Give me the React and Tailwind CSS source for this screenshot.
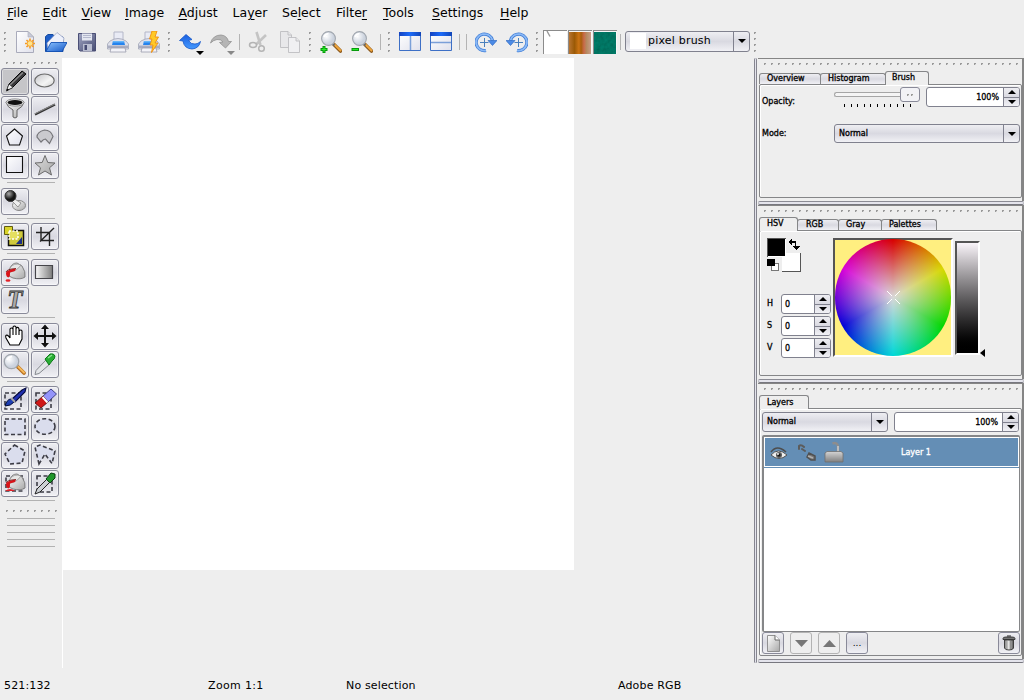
import React from "react";

const small =
  "font-['DejaVu_Sans',sans-serif] text-[8px] leading-[12px] [-webkit-text-stroke:0.3px_currentColor] whitespace-nowrap text-black";
const face = "bg-linear-to-b from-[#eeeef2] via-[#d9d9e1] to-[#f1f1f5]";

function Dots({ count, vertical, className = "" }) {
  return (
    <div className={`flex shrink-0 ${vertical ? "flex-col gap-[4px]" : "gap-[5px]"} ${className}`}>
      {Array.from({ length: count }, (_, i) => (
        <span key={i} className="h-[2px] w-[2px] border-t border-l border-[#9a9a9a] bg-[#d6d6d6]" />
      ))}
    </div>
  );
}

function Arrow({ up, color = "#000", big }) {
  return (
    <svg className={`shrink-0 ${big ? "h-[7px] w-[13px]" : "h-[4px] w-[8px]"}`} viewBox="0 0 7 4" preserveAspectRatio="none">
      <path d={up ? "M0 4L3.5 0L7 4Z" : "M0 0H7L3.5 4Z"} fill={color} />
    </svg>
  );
}

const menus = [
  ["", "F", "ile", "w-[35.5px]"],
  ["", "E", "dit", "w-[39px]"],
  ["", "V", "iew", "w-[43.5px]"],
  ["", "I", "mage", "w-[53.5px]"],
  ["", "A", "djust", "w-[54px]"],
  ["La", "y", "er", "w-[49.5px]"],
  ["Se", "l", "ect", "w-[54px]"],
  ["Filte", "r", "", "w-[47px]"],
  ["", "T", "ools", "w-[49px]"],
  ["", "S", "ettings", "w-[68px]"],
  ["", "H", "elp", "w-[40px]"],
];

/* ---------- toolbar drawings, 22 x 22 units ---------- */
const page = (
  <>
    <path d="M2.5 .5H14L19.500 6V21.500H2.500Z" fill="url(#paper)" stroke="#a9abbb" />
    <path d="M14 .5V6H19.5Z" fill="#c9cbd9" stroke="#a9abba" strokeWidth=".6" />
  </>
);
const printer = (
  <>
    <path d="M7 1H16V11H7Z" fill="#e9ebf5" stroke="#b4b7c8" />
    <path d="M3 10Q11 5 19 10L21.500 13V18H.5V13Z" fill="#dfe1eb" stroke="#a0a3b5" strokeWidth=".8" />
    <path d="M6 10H17L18 14H5Z" fill="#2583ee" />
    <path d="M6 10H17L17.300 11.500H5.700Z" fill="#63b5fa" />
    <path d="M1 14.500H21V17H1Z" fill="#a9adc0" />
    <path d="M4 17H18L19 21H3Z" fill="#f3f3f8" stroke="#9a9cac" strokeWidth=".8" />
  </>
);
const lens = (
  <>
    <path d="M14 13.500L20.500 20" stroke="#8b581c" strokeWidth="3.600" strokeLinecap="round" />
    <path d="M14.500 13.500L20.500 19.500" stroke="#efa63c" strokeWidth="2" strokeLinecap="round" />
    <path d="M12.500 12.500L14.500 14.500" stroke="#666" strokeWidth="2" />
    <circle cx="8.500" cy="7.500" r="6.900" fill="url(#glass)" stroke="#a0a6ae" strokeWidth="1.100" />
    <path d="M4 6Q5 3 8.500 2.500" stroke="#fff" strokeWidth="1.500" fill="none" />
  </>
);
const rotate = (
  <>
    <path d="M11 19.500A8.300 8.300 0 1 1 17.500 9.500" fill="none" stroke="#3a78d4" strokeWidth="3.200" />
    <path d="M11 19.500A8.300 8.300 0 1 1 17.500 9.500" fill="none" stroke="#8ab9f6" strokeWidth="1.800" />
    <path d="M13 9.500H22L17.500 14.500Z" fill="#4c8be6" stroke="#2461bd" strokeWidth=".6" />
    <path d="M9.500 7V16M5 11.500H13.500" stroke="#4a80bd" strokeWidth="1" />
  </>
);

const bar = {
  new: (
    <>
      {page}
      <g stroke="#f59a23" strokeWidth="1.600">
        <path d="M16 7.500V17.500M11 12.500H21M12.500 9L19.500 16M19.500 9L12.500 16" />
      </g>
      <circle cx="16" cy="12.500" r="2.800" fill="#ffe489" stroke="#f6a83a" />
    </>
  ),
  open: (
    <>
      <path d="M.5 20.500V5.500L3 3.500H8L10 6H18V20.500Z" fill="#1f5fc8" stroke="#164a9f" />
      <path d="M2 12L12 1.500L19 7L18 14L3 19Z" fill="#eef1fb" stroke="#929cbc" strokeWidth=".7" />
      <path d="M1 20.500L6 11.500H22L17 20.500Z" fill="url(#folder)" stroke="#1452b4" strokeWidth=".9" />
    </>
  ),
  save: (
    <>
      <path d="M2.500 2.500H19.500V20H4L2.500 18.500Z" fill="url(#disk)" stroke="#4b4f76" />
      <path d="M6 2.500H16V9.500H6Z" fill="#e4e7f1" />
      <path d="M7 4.500H15M7 6.500H15" stroke="#a7acc4" strokeWidth=".8" />
      <path d="M7 13H16V20H7Z" fill="#b9bdd0" />
      <path d="M8.500 14H11V19H8.500Z" fill="#454a72" />
    </>
  ),
  print: printer,
  quick: (
    <>
      {printer}
      <path d="M14 0H19L17 6H20.500L17 12H20L13.500 21.500L15 14H12L14 8H11.500Z" fill="#ffc928" stroke="#ef8e12" strokeWidth=".9" />
    </>
  ),
  undo: <path d="M.5 9.500L7 3.500L13 8.500L9.500 9.500Q12 13.500 16 13Q19 13 21.500 10.500Q20 17.500 13 18Q5 17.500 4 10Z" fill="url(#blue)" stroke="#1557c8" strokeWidth=".8" />,
  redo: <path d="M.5 12Q3 4 11 4Q17 4.500 18.500 10.500H21.500L15.500 17L9.500 11.500L13 11Q11 8 7 8.500Q3.500 9 .5 12Z" fill="#b5b5b5" stroke="#929292" strokeWidth=".8" />,
  cut: (
    <g fill="none" stroke="#b4b4b4">
      <path d="M8.500 1L12.500 14M18 4L8 13.500" strokeWidth="2.600" stroke="#c4c4c4" />
      <ellipse cx="5" cy="14" rx="3.500" ry="2.400" strokeWidth="1.500" />
      <circle cx="13.500" cy="17.500" r="2.800" strokeWidth="1.500" />
    </g>
  ),
  copy: (
    <g fill="#e8e8ea" stroke="#bdbdc1" strokeWidth=".9">
      <path d="M1.500 .5H9L12.500 4V16.500H1.500Z" />
      <path d="M9.500 6.500H17L20.500 10V21.500H9.500Z" fill="#f0f0f2" />
      <path d="M9 .5V4H12.500M17 6.500V10H20.500" />
    </g>
  ),
  zin: (<>{lens}<path d="M4 15V22M.5 18.500H7.500" stroke="#089a0c" strokeWidth="3" /><path d="M4 16V21M1.500 18.500H6.500" stroke="#25f128" strokeWidth="1" /></>),
  zout: (<>{lens}<path d="M.5 18.500H8" stroke="#089a0c" strokeWidth="3" /><path d="M1.500 18.500H7" stroke="#25f128" strokeWidth="1" /></>),
  splitv: (
    <>
      <path d="M.5 1.500H21.500V19.500H.5Z" fill="url(#paper)" stroke="#3e70c6" />
      <path d="M0 1H22V5H0Z" fill="url(#title)" /><path d="M11.500 5V19" stroke="#7b9fd8" strokeWidth="1.500" />
    </>
  ),
  splith: (
    <>
      <path d="M.5 1.500H21.500V19.500H.5Z" fill="url(#paper)" stroke="#3e70c6" />
      <path d="M0 1H22V5H0Z" fill="url(#title)" /><path d="M1 11.500H21" stroke="#7b9fd8" strokeWidth="1.500" />
    </>
  ),
  cw: rotate,
  ccw: <g transform="translate(22 0) scale(-1 1)">{rotate}</g>,
};

function BarIcon({ name, menu }) {
  return (
    <div className="relative flex h-full w-[31px] shrink-0 items-center justify-center">
      <svg className="h-[22px] w-[22px]" viewBox="0 0 22 22">{bar[name]}</svg>
      {menu && <span className="absolute right-px bottom-[3px] flex"><Arrow color={menu} /></span>}
    </div>
  );
}

const Sep = () => <div className="flex w-[7px] shrink-0 justify-center"><span className="h-[16px] w-px bg-[#b4b4b4]" /></div>;
const Handle = ({ className = "w-[10px]" }) => <div className={`flex shrink-0 justify-center ${className}`}><Dots count={4} vertical /></div>;

function Defs() {
  return (
    <svg className="absolute h-0 w-0">
      <defs>
        <linearGradient id="paper" x2="1" y2="1"><stop stopColor="#fff" /><stop offset="1" stopColor="#e0e1ec" /></linearGradient>
        <linearGradient id="gray" x2="1" y2="1"><stop stopColor="#fff" /><stop offset="1" stopColor="#a8a8a8" /></linearGradient>
        <linearGradient id="pale" x2="1" y2="1"><stop stopColor="#c4c4c8" /><stop offset=".6" stopColor="#f4f4f4" /><stop offset="1" stopColor="#d0d0d0" /></linearGradient>
        <linearGradient id="mid" x2="1" y2="1"><stop stopColor="#dcdcdc" /><stop offset="1" stopColor="#a8a8a8" /></linearGradient>
        <linearGradient id="horiz" x2="1"><stop stopColor="#fafafa" /><stop offset="1" stopColor="#7c7c7c" /></linearGradient>
        <linearGradient id="folder" x2="1" y2="1"><stop stopColor="#8cc2ff" /><stop offset="1" stopColor="#1458c6" /></linearGradient>
        <linearGradient id="disk" x2="1" y2="1"><stop stopColor="#a0a5c2" /><stop offset="1" stopColor="#474c72" /></linearGradient>
        <linearGradient id="blue" x2="0" y2="1"><stop stopColor="#1b5fe0" /><stop offset="1" stopColor="#459aff" /></linearGradient>
        <linearGradient id="title" x2="1"><stop stopColor="#1443c0" /><stop offset=".5" stopColor="#1c6af8" /><stop offset="1" stopColor="#1145b8" /></linearGradient>
        <linearGradient id="dull" x2="0" y2="1"><stop stopColor="#d4d4d4" /><stop offset="1" stopColor="#808080" /></linearGradient>
        <linearGradient id="can" x2="1"><stop stopColor="#777" /><stop offset=".4" stopColor="#eee" /><stop offset="1" stopColor="#555" /></linearGradient>
        <radialGradient id="glass" cx=".35" cy=".35"><stop stopColor="#fff" /><stop offset="1" stopColor="#ccd3de" /></radialGradient>
        <radialGradient id="ball" cx=".35" cy=".3"><stop stopColor="#aaa" /><stop offset="1" stopColor="#151515" /></radialGradient>
        <filter id="weave"><feTurbulence type="fractalNoise" baseFrequency=".3" numOctaves="2" /><feColorMatrix values="0 0 0 0 0  .5 0 0 0 .12  .4 0 0 0 .1  0 0 0 0 1" /></filter>
      </defs>
    </svg>
  );
}

/* ---------- paint tool drawings, 28 x 28 units ---------- */
const dash = { fill: "none", stroke: "#3d3d46", strokeWidth: 1.6, strokeDasharray: "4 2.5" };
const bucket = (
  <>
    <path d="M9 9Q11 4 16 4L21 7Q25 13 24 18Q20 21 12 19L8 17Z" fill="url(#gray)" stroke="#777" strokeWidth=".9" />
    <path d="M9 9Q13 3 20 6Q16 12 9 13Z" fill="#e6e6e6" stroke="#8a8a8a" strokeWidth=".7" />
    <path d="M5 14Q5 11 15 9.500L14 12L9 13.500Q9.500 17 7.500 18.500Q5 18 5 14Z" fill="#d9141a" />
    <path d="M5 13Q6 10 15 9.500" fill="none" stroke="#701313" strokeWidth=".8" />
  </>
);
const tools = {
  brush: (<><path d="M6 22L8 16L21 3L25 6L11 20Z" fill="#38383a" stroke="#080808" /><path d="M9 17L22 4.500" stroke="#8c8c8c" strokeWidth="1.300" /><path d="M5.500 22.500L8 16L12 19.500Z" fill="#eee" stroke="#222" strokeWidth=".7" /><path d="M5 23.500L6.500 20.500L8 22Z" /></>),
  ellipse: <ellipse cx="13.500" cy="12.500" rx="9.700" ry="6.500" fill="url(#pale)" stroke="#6c6c6c" strokeWidth="1.200" />,
  funnel: (<><path d="M5 6Q6 11 12 14V21Q14 23 16 21V14Q22 11 23 6Z" fill="url(#gray)" stroke="#555" strokeWidth=".9" /><ellipse cx="14" cy="6.500" rx="9" ry="3.600" fill="#eee" stroke="#777" strokeWidth=".8" /><ellipse cx="14" cy="6.500" rx="7.500" ry="2.500" fill="#111" /></>),
  line: (<><path d="M4 18.500L24 8.500" stroke="#333" strokeWidth="2.200" /><path d="M4 17.800L24 8" stroke="#a1a1a1" strokeWidth=".8" /></>),
  poly: <path d="M13.500 5L21.500 12L18.500 21H8.500L5.500 12Z" fill="url(#paper)" stroke="#111" strokeWidth="1.100" />,
  curve: <path d="M6 13Q6 8 13.500 6Q20 6 22 12.500L18.500 19.500L14.500 15Q12.500 15 10 18Z" fill="#cacace" stroke="#76767a" strokeWidth="1.200" />,
  rect: <path d="M5.500 4.500H21.500V20.500H5.500Z" fill="url(#paper)" stroke="#111" strokeWidth="1.100" />,
  star: <path d="M14 3.500L16.800 10.500L24 11L18.500 15.800L20.500 23L14 19L7.500 23L9.500 15.800L4 11L11.200 10.500Z" fill="url(#mid)" stroke="#6b6b6b" />,
  stamp: (<><ellipse cx="18" cy="17.500" rx="6.500" ry="5" fill="url(#gray)" stroke="#888" /><path d="M12 10L20 15L17 19L11 13Z" fill="#eee" stroke="#777" strokeWidth=".7" /><circle cx="9.500" cy="8" r="5.500" fill="url(#ball)" stroke="#333" /></>),
  transform: (<><path d="M7.500 7.500H22.500V22.500H7.500Z" fill="#d0ca3c" stroke="#111" strokeWidth="1.500" /><path d="M3.500 3.500H11.500V11.500H3.500Z" fill="#d9d32a" stroke="#605c10" /><path d="M8 8H17V16H8Z" fill="#e4df60" stroke="#fff" strokeWidth="1.500" strokeDasharray="2 1.500" /><path d="M15 21H21V14Z" fill="#1d2f85" /></>),
  crop: <path d="M10 4V17.500H23M5 9.500H18.500V23M9 18.500L23 5" fill="none" stroke="#222" strokeWidth="1.400" />,
  fill: (<>{bucket}<ellipse cx="7" cy="21.500" rx="2.500" ry="1.300" fill="#e32228" /></>),
  gradient: <path d="M4.500 6.500H21.500V19.500H4.500Z" fill="url(#horiz)" stroke="#45454a" strokeWidth="1.200" />,
  hand: <path d="M9 22L5 15Q4 12 6 12Q8 13 9 15V6Q10.500 4 12 6V4Q13.500 2 15 4V5.500Q17 3 18 6V8Q20 6 21 8V16L18 22Z M12 6V12M15 5V12M18 7V12" fill="#fff" stroke="#000" strokeWidth="1.100" />,
  move: (<><path d="M14 4V22M5 13H23" stroke="#111" strokeWidth="2" /><path d="M14 1.500L18 6H10ZM14 24.500L18 20H10ZM2.500 13L7 9V17ZM25.500 13L21 9V17Z" fill="#111" /></>),
  zoom: (<><path d="M17 16L23 22" stroke="#b56d1e" strokeWidth="3.800" strokeLinecap="round" /><path d="M17.500 16L23 21.500" stroke="#f6b95a" strokeWidth="2" strokeLinecap="round" /><circle cx="10.500" cy="10.500" r="7.200" fill="url(#glass)" stroke="#a0a6ad" strokeWidth="1.300" /><path d="M6 9Q7 6 11 5.500" stroke="#fff" strokeWidth="1.500" fill="none" /></>),
  picker: (<><path d="M4 23.500L5 19.500L15 9L19 13L8 22.500Z" fill="#e3e5e8" stroke="#85888e" /><path d="M14 8L19 3Q23 2 24 5Q24 8 21 10L18 14Z" fill="#29ad34" stroke="#0c7b18" /><path d="M17 7L21 4" stroke="#8be78f" strokeWidth="1.500" /></>),
  selbrush: (<><path d="M4 7H20V23H4Z" {...dash} /><path d="M4 20Q6 13 10 13L13 16Q10 20 4 20Z" fill="#1e3fb4" stroke="#050e36" /><path d="M11 13L21 4L25 2L24 6L14 16Z" fill="#2030b0" stroke="#070c3e" strokeWidth="1.100" /><path d="M10 12L14 16" stroke="#aaa" strokeWidth="2" /></>),
  selerase: (<><path d="M5 7H20V23H5Z" {...dash} /><path d="M12 10L20 3L25.500 8L17 16Z" fill="#9494fa" stroke="#25256b" strokeWidth=".8" /><path d="M12 10L17 16L10 22L4 17Z" fill="#cf1717" stroke="#4d0707" strokeWidth=".8" /><path d="M11.500 11L16.500 16.500" stroke="#fff" strokeWidth="2" /></>),
  selrect: <path d="M4 5H24V20.500H4Z" {...dash} fill="#dadded" />,
  selellipse: <ellipse cx="14" cy="12.500" rx="10" ry="7.800" {...dash} fill="#dadded" />,
  selpoly: <path d="M13.500 3L24 9L21 21L9 22L4 12Z" {...dash} fill="#dadded" />,
  selfree: <path d="M8 22L4 5L9 3L24 9L21 21.500L14 12Z" {...dash} fill="#dadded" />,
  selfill: (<><path d="M5 6H22V21H5Z" {...dash} />{bucket}<path d="M4 21Q9 17 14 21Z" fill="#e22128" /></>),
  selpick: (<><path d="M6 6H21V22H6Z" {...dash} /><path d="M4 24L6 19L16 9L19 12L9 22Z" fill="#ccd0d4" stroke="#252525" /><path d="M15 9L20 3L24 4L24 8L19 13Z" fill="#20972b" stroke="#093f10" /></>),
};

function Tool({ name, active }) {
  return (
    <div className={`flex h-[27px] w-[28px] items-center justify-center overflow-hidden rounded-[3px] border border-[#898a99] shadow-[inset_0_0_0_1px_#ffffff66] ${active ? "bg-[#c5c5c8]" : face}`}>
      {name === "text" ? (
        <span className="-mt-[2px] font-['Liberation_Serif',serif] text-[25px] leading-none font-bold text-[#aaa] italic [-webkit-text-stroke:0.8px_#333]">T</span>
      ) : (
        <svg className="h-[28px] w-[28px] shrink-0" viewBox="0 0 28 28">{tools[name]}</svg>
      )}
    </div>
  );
}

function Group({ names, className }) {
  return (
    <div className={`grid w-[58px] grid-cols-[28px_28px] gap-x-[2px] gap-y-px ${className}`}>
      {names.map((n) => <Tool key={n} name={n} active={n === "brush"} />)}
    </div>
  );
}
const Rule = ({ className = "" }) => <div className={`ml-[6px] h-px w-[48px] shrink-0 bg-[#b2b2b2] ${className}`} />;

function Toolbox() {
  return (
    <aside className="flex w-[62px] shrink-0 flex-col pt-[4px] pl-px">
      <Dots count={8} className="ml-[5px]" />
      <Group className="mt-[4px]" names={["brush", "ellipse", "funnel", "line", "poly", "curve", "rect", "star"]} />
      <Rule className="mt-[3px]" />
      <Group className="mt-[5px]" names={["stamp"]} />
      <Rule className="mt-[3px]" />
      <Group className="mt-[4px]" names={["transform", "crop"]} />
      <Rule className="mt-[3px]" />
      <Group className="mt-[5px]" names={["fill", "gradient", "text"]} />
      <Rule className="mt-[3px]" />
      <Group className="mt-[5px]" names={["hand", "move", "zoom", "picker"]} />
      <Rule className="mt-[3px]" />
      <Group className="mt-[4px]" names={["selbrush", "selerase", "selrect", "selellipse", "selpoly", "selfree", "selfill", "selpick"]} />
      <Rule className="mt-[3px]" />
      <Dots count={8} className="mt-[9px] ml-[5px]" />
      <div className="mt-[6px] flex flex-col gap-[6px]">
        {[0, 1, 2, 3, 4].map((i) => <Rule key={i} />)}
      </div>
    </aside>
  );
}

function Spin({ value, className, right }) {
  return (
    <div className={`flex overflow-hidden rounded-[3px] border border-[#80818e] bg-white ${className}`}>
      <span className={`flex flex-1 items-center pt-px ${right ? "justify-end pr-[4px]" : "pl-[3px]"} ${small}`}>{value}</span>
      <span className={`flex w-[16px] flex-col border-l border-[#80818e] ${face}`}>
        <span className="flex flex-1 items-center justify-center border-b border-[#80818e]"><Arrow up /></span>
        <span className="flex flex-1 items-center justify-center"><Arrow /></span>
      </span>
    </div>
  );
}

function Combo({ value, className }) {
  return (
    <div className={`flex overflow-hidden rounded-[3px] border border-[#80818e] ${face} ${className}`}>
      <span className={`flex flex-1 items-center pl-[4px] ${small}`}>{value}</span>
      <span className="flex w-[16px] items-center justify-center border-l border-[#80818e]"><Arrow /></span>
    </div>
  );
}

function Tab({ label, active, className }) {
  return (
    <div className={`flex shrink-0 items-center rounded-t-[3px] border border-b-0 border-[#858688] pl-[7px] ${small} ${active ? "z-10 -mb-px h-[14px] bg-[#eee] pb-px" : `h-[11px] ${face}`} ${className}`}>
      {label}
    </div>
  );
}

function Dock({ tabs, height, gap = "mt-[6px]", children }) {
  return (
    <section className={`flex shrink-0 flex-col border-t border-r-2 border-[#858585] pl-px ${height}`}>
      <Dots count={37} className="mt-[4px] ml-[5px]" />
      <div className={`flex h-[13px] items-end ${gap}`}>{tabs}</div>
      <div className="mb-[3px] flex flex-1 flex-col rounded-[2px] border border-[#858688] shadow-[inset_1px_1px_0_#fff]">{children}</div>
    </section>
  );
}

const Splitter = () => <div className="h-[4px] shrink-0 rounded-[2px] border-y border-t-[#8b8b94] border-b-[#77777f] bg-[#e4e4ec]" />;

export default function App() {
  return (
    <div className="flex h-[700px] w-[1024px] flex-col overflow-hidden bg-[#eee] font-['DejaVu_Sans',sans-serif] text-black">
      <Defs />
      <nav className="flex h-[26px] shrink-0 items-center pl-[7px] text-[12.5px]">
        {menus.map(([a, b, c, w]) => (
          <span key={a + b + c} className={`shrink-0 whitespace-nowrap ${w}`}>{a}<u className="underline decoration-1 underline-offset-2">{b}</u>{c}</span>
        ))}
      </nav>

      <div className="flex h-[32px] shrink-0 items-center">
        <Handle className="w-[9px]" />
        <BarIcon name="new" /><BarIcon name="open" /><BarIcon name="save" /><BarIcon name="print" /><BarIcon name="quick" />
        <Handle />
        <BarIcon name="undo" menu="#000" /><BarIcon name="redo" menu="#888" />
        <Sep />
        <BarIcon name="cut" /><BarIcon name="copy" />
        <Handle />
        <BarIcon name="zin" /><BarIcon name="zout" />
        <Sep /><Handle />
        <BarIcon name="splitv" /><BarIcon name="splith" />
        <Sep /><Sep />
        <BarIcon name="cw" /><BarIcon name="ccw" />
        <Handle />
        <div className="mb-px ml-px flex h-[24px] gap-px">
          <div className="h-[24px] w-[24px] border-t border-l border-[#8b8b8b] bg-white">
            <svg className="h-[10px] w-[10px]" viewBox="0 0 10 10"><path d="M3 0L6 5.500" stroke="#999" strokeWidth="1.400" /></svg>
          </div>
          <div className="h-[24px] w-[24px] border-t border-l border-[#8b8b8b] bg-[#f6f6f6] pt-px">
            <div className="h-[22px] w-[22px] bg-[linear-gradient(90deg,#b87532,#9b5a06_25%,#cc7414_45%,#a85f0c_55%,#c96a4a_68%,#b58a60_80%,#ca9c88)]" />
          </div>
          <div className="h-[24px] w-[24px] border-t border-l border-[#8b8b8b] bg-[#f6f6f6] pt-px">
            <svg className="h-[22px] w-[22px]"><rect width="22" height="22" fill="#00604c" /><rect width="22" height="22" filter="url(#weave)" opacity=".3" /></svg>
          </div>
        </div>
        <Sep />
        <div className={`mb-[2px] ml-px flex h-[21px] w-[125px] items-center overflow-hidden rounded-[3px] border border-[#80818e] ${face}`}>
          <span className="ml-[4px] h-[16px] w-[16px] bg-white" />
          <span className="flex-1 pl-[2px] text-[11px] tracking-[0.2px] whitespace-nowrap">pixel brush</span>
          <span className="flex h-full w-[16px] items-center justify-center border-l border-[#80818e]"><Arrow /></span>
        </div>
        <Handle />
      </div>

      <main className="flex h-[610px] shrink-0">
        <Toolbox />
        <div className="w-[692px] shrink-0 border-l border-white">
          <div className="h-[512px] w-[511px] bg-white" />
        </div>
        <div className="mr-px h-[605px] w-[3px] shrink-0 rounded-[2px] border-x border-[#85858f] bg-[#e4e4ec]" />

        <div className="flex w-[266px] shrink-0 flex-col">
          <Dock
            height="h-[143px]"
            tabs={<><Tab label="Overview" className="w-[62px]" /><Tab label="Histogram" className="-ml-px w-[66px]" /><Tab label="Brush" active className="-ml-px w-[44px] pl-[6px]!" /></>}
          >
            <div className="flex pt-[2px]">
              <span className={`mt-[9px] w-[72px] shrink-0 pl-[2px] ${small}`}>Opacity:</span>
              <div className="flex w-[94px] shrink-0 flex-col pl-[2px]">
                <div className="flex h-[15px] items-center">
                  <span className="h-[5px] w-[66px] rounded-l-full border border-r-0 border-[#a6a6a6] bg-[#f5f5f5]" />
                  <span className="flex h-[15px] w-[20px] items-center justify-center rounded-[3px] border border-[#898a99] bg-[#f2f2f6]"><Dots count={2} className="gap-[2px]!" /></span>
                </div>
                <div className="mt-[2px] ml-[10px] flex w-[67px] justify-between">
                  {Array.from({ length: 11 }, (_, i) => <span key={i} className="h-[3px] w-px bg-black" />)}
                </div>
              </div>
              <Spin value="100%" right className="h-[20px] w-[94px]" />
            </div>
            <div className="mt-[16px] flex items-center">
              <span className={`w-[74px] shrink-0 pl-[2px] ${small}`}>Mode:</span>
              <Combo value="Normal" className="h-[19px] w-[186px]" />
            </div>
          </Dock>
          <Splitter />
          <Dock
            height="h-[174px]"
            gap="mt-[5px]"
            tabs={<><Tab label="HSV" active className="w-[39px]" /><Tab label="RGB" className="-ml-px w-[42px] pl-[8px]!" /><Tab label="Gray" className="-ml-px w-[44px]" /><Tab label="Palettes" className="-ml-px w-[56px]" /></>}
          >
            <div className="flex pt-[7px]">
              <div className="w-[73px] shrink-0 pl-[7px]">
                <svg className="h-[34px] w-[35px]" viewBox="0 0 35 34" shapeRendering="crispEdges">
                  <path d="M15 15H33V33H15Z" fill="#fff" /><path d="M33.500 15V33.500H15" fill="none" stroke="#555" />
                  <path d="M0 0H19V19H0Z" fill="#fff" /><path d="M0 0H19V1H1V19H0Z" fill="#555" /><path d="M1 1H18V18H1Z" />
                  <path d="M4.500 25.500H11.500V32.500H4.500Z" fill="#fff" stroke="#777" /><path d="M0 21H8V28H0Z" />
                  <path d="M21 4L25 0V8ZM25 3H29V8H33L29 12L25 8H28V5H25Z" />
                </svg>
                <div className="mt-[22px] flex flex-col gap-[2px]">
                  {["H", "S", "V"].map((l) => (
                    <div key={l} className="flex items-center">
                      <span className={`w-[14px] shrink-0 ${small}`}>{l}</span>
                      <Spin value="0" className="h-[20px] w-[50px] shrink-0" />
                    </div>
                  ))}
                </div>
              </div>
              <div className="h-[119px] w-[120px] shrink-0 border-2 border-t-[#555] border-r-white border-b-white border-l-[#555] bg-[#ffef80]">
                <div className="-mt-px flex h-[117px] w-[116px] items-center justify-center rounded-full bg-[radial-gradient(circle_closest-side,#d8d8d8,transparent),conic-gradient(#d80000,#d8d800,#00d800,#00d8d8,#0000d8,#d800d8,#d80000)]">
                  <svg className="h-[13px] w-[13px]" viewBox="0 0 13 13"><path d="M0 0L5 5M8 8L13 13M13 0L8 5M5 8L0 13" stroke="#fff" /></svg>
                </div>
              </div>
              <div className="mt-[3px] ml-[2px] h-[114px] w-[25px] shrink-0 border-2 border-t-[#555] border-r-white border-b-white border-l-[#555] bg-linear-to-b from-[#faf5fa] to-black" />
              <svg className="mt-[111px] h-[8px] w-[5px]" viewBox="0 0 5 8"><path d="M0 4L5 0V8Z" /></svg>
            </div>
          </Dock>
          <Splitter />
          <Dock height="h-[276px]" gap="mt-[5px]" tabs={<Tab label="Layers" active className="w-[50px] pb-0!" />}>
            <div className="flex justify-between pt-[3px] pr-[2px] pl-[2px]">
              <Combo value="Normal" className="h-[20px] w-[126px]" />
              <Spin value="100%" right className="h-[20px] w-[125px]" />
            </div>
            <div className="mt-[3px] mr-px ml-[2px] h-[197px] shrink-0 rounded-[2px] border-2 border-r border-b border-[#858688] bg-white">
              <div className="flex h-[30px] items-center border border-white bg-[#648eb5] pt-[2px]">
                <svg className="ml-[5px] h-[18px] w-[18px]" viewBox="0 0 18 18">
                  <path d="M1 11Q8 3 17 11Q9 18 1 11Z" fill="#eee" stroke="#464646" strokeWidth=".9" /><circle cx="9" cy="11" r="3" fill="#5a5a5a" /><circle cx="9" cy="11" r="1.500" fill="#181818" /><circle cx="8" cy="10" r=".9" fill="#fff" /><path d="M1 8Q7 0 16 8" fill="none" stroke="#4d4d4d" strokeWidth="1.500" />
                </svg>
                <svg className="ml-[9px] h-[18px] w-[20px]" viewBox="0 0 20 18">
                  <path d="M2 5L2 2Q4 0 7 3M5 5L8 7" fill="none" stroke="#5c5c5c" strokeWidth="2" strokeLinecap="round" /><path d="M12 9L10 13L14 16L18 16L18 12Z" fill="#777" stroke="#505050" strokeWidth="1.500" /><path d="M11 12L16 14" stroke="#b0b0b0" strokeWidth="1.500" />
                </svg>
                <svg className="ml-[7px] h-[22px] w-[20px] -translate-y-px" viewBox="0 0 20 22">
                  <path d="M14 12V5Q13 1 8.500 2.500" fill="none" stroke="#8d8d8d" strokeWidth="2.500" /><path d="M14 11V5" stroke="#ddd" strokeWidth="1.200" /><path d="M1 12L3 10.500H17L19 12V21H1Z" fill="url(#dull)" stroke="#707070" strokeWidth=".8" />
                </svg>
                <span className={`ml-[57px] text-white! ${small}`}>Layer 1</span>
              </div>
              <div className="h-px bg-[#648eb5]" />
            </div>
            <div className="flex items-center gap-[6px] pl-[2px]">
              <Btn><svg className="h-[17px] w-[13px]" viewBox="0 0 13 17"><path d="M.5 .5H8L12.500 5V16.500H.5Z" fill="url(#gray)" stroke="#888" strokeWidth=".9" /><path d="M8 .5V5H12.500" fill="#fff" stroke="#666" /></svg></Btn>
              <Btn off><Arrow big color="#777" /></Btn>
              <Btn off><Arrow big up color="#777" /></Btn>
              <Btn><span className="text-[9px] leading-none">...</span></Btn>
              <Btn className="mr-px ml-auto">
                <svg className="h-[16px] w-[14px]" viewBox="0 0 14 16"><path d="M2.500 5H11.500V13Q11 15 7 15Q3 15 2.500 13Z" fill="url(#can)" stroke="#333" strokeWidth=".9" /><path d="M5 6V14M8.500 6V14" stroke="#777" strokeWidth=".6" /><path d="M1 3.500Q1 2 4 2H10Q13 2 13 3.500V4.500H1Z" fill="#777" stroke="#222" strokeWidth=".8" /><path d="M5 1H9" stroke="#222" /></svg>
              </Btn>
            </div>
          </Dock>
          <Splitter />
        </div>
      </main>

      <footer className="flex h-[32px] shrink-0 items-center pt-[4px] pl-[4px] text-[11px] tracking-[0.15px] whitespace-nowrap">
        <span className="w-[204px]">521:132</span>
        <span className="w-[138px] tracking-[0.35px]">Zoom 1:1</span>
        <span className="w-[272px]">No selection</span>
        <span>Adobe RGB</span>
      </footer>
    </div>
  );
}

function Btn({ children, off, className = "" }) {
  return (
    <div className={`flex h-[22px] w-[22px] shrink-0 items-center justify-center rounded-[3px] border ${off ? "border-[#b3b3b3] bg-[#eee]" : `border-[#898a99] ${face}`} ${className}`}>
      {children}
    </div>
  );
}
